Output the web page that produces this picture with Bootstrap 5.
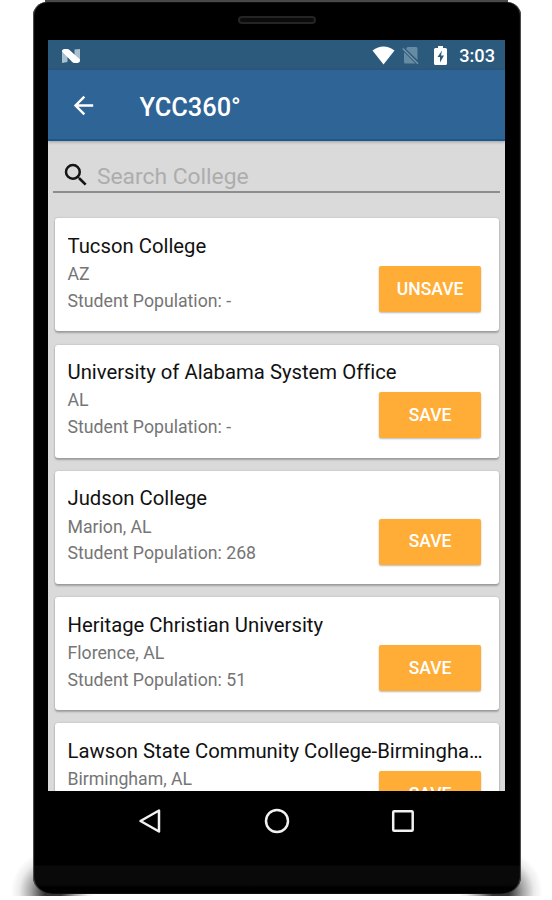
<!DOCTYPE html>
<html lang="en">
<head>
<meta charset="utf-8">
<meta name="viewport" content="width=device-width, initial-scale=1">
<title>YCC360°</title>
<link rel="stylesheet" href="https://cdn.jsdelivr.net/npm/bootstrap@5.3.0/dist/css/bootstrap.min.css">
<style>
body { width: 552px; height: 900px; background: #fff; font-family: Roboto, "Liberation Sans", sans-serif; line-height: 1; font-variant-ligatures: none; }
.stage { height: 900px; padding: 2px 31.5px 0 33px; }
.ground { left: 5px; right: 4px; top: 846px; height: 50px; filter: blur(.7px);
  background: radial-gradient(ellipse 42px 42px at 48px 92%, rgba(0,0,0,.8) 20%, rgba(0,0,0,.36) 52%, rgba(0,0,0,.08) 80%, rgba(0,0,0,0) 100%) left / 50% 100% no-repeat,
              radial-gradient(ellipse 42px 42px at calc(100% - 48px) 92%, rgba(0,0,0,.8) 20%, rgba(0,0,0,.36) 52%, rgba(0,0,0,.08) 80%, rgba(0,0,0,0) 100%) right / 50% 100% no-repeat; }
.top-edge { left: 45px; right: 44px; top: 0; height: 6px; background: #484848; }
.phone { height: 892px; background: linear-gradient(#000 863px, #090909 864px, #090909 882px, #000 886px); border-radius: 14px 14px 19px 19px / 14px 14px 17px 17px; box-shadow: inset 1px 0 1px #555, inset -1px 0 1px #555; padding: 0 15.5px 0 15px; }
.ear { height: 38px; padding-top: 14px; }
.speaker { width: 78px; height: 8px; border: 2px solid #242424; border-radius: 4px; background: #0b0b0b; }
.screen { height: 751px; background: #dadada; }
.status { height: 30px; background: #2c5a7c; padding: 1px 10px 0 12px; }
.gap-signal { margin-left: 7px; }
.gap-battery { margin-left: 15px; }
.appbar { height: 71px; background: #2f6496; border-bottom: 2px solid #1c588a; box-shadow: 0 1px 3px rgba(0,0,0,.28); position: relative; padding: 1px 0 0 21px; }
.app-title { font-size: 25.4px; font-weight: 500; margin-left: 41.5px; padding-top: 4px; white-space: nowrap; }
.clock { font-size: 18.2px; font-weight: 500; margin-left: 12px; padding-top: 1px; }
.search { height: 52px; margin: 0 5px; border-bottom: 2px solid #8d8d8d; padding: 19px 0 0 8px; }
.hint { font-size: 22.8px; color: #adadad; margin-left: 6px; line-height: 34px; }
.results { padding: 25.3px 6.5px 0; }
.college { height: 113px; margin-bottom: 13.3px; background: #fff; border-radius: 3px; box-shadow: 0 2px 2px rgba(0,0,0,.25), 0 0 2px rgba(0,0,0,.2); padding: 15.4px 13px 0; }
.college-name { font-size: 20.3px; line-height: 24px; color: #111; }
.meta { font-size: 17.7px; line-height: 26.5px; color: #757575; padding-top: 3.5px; }
.save { width: 101.5px; height: 46px; background: #ffad36; color: #fff; font-size: 17.5px; font-weight: 500; border-radius: 2px; margin: 8.3px 4.7px 0 0; box-shadow: 0 1px 2px rgba(0,0,0,.28); border: 0; padding: 1px 0 0; }
.keys { height: 60px; padding: 0 90px 0 90px; }
</style>
</head>
<body class="m-0 overflow-hidden position-relative">
<div class="ground position-absolute"></div>
<div class="top-edge position-absolute"></div>
<main class="stage position-relative">
  <div class="phone overflow-hidden">
    <div class="ear d-flex justify-content-center"><div class="speaker"></div></div>
    <div class="screen overflow-hidden">
      <div class="status d-flex align-items-center text-white">
        <svg width="22" height="16" viewBox="0 0 22 16"><path d="M2 2v13l5.500-1V5zM14.500 1.500v9.500l5.500 3V1z" fill="#a9c0d0"/><path d="M2 3.500Q2 1 4.500 1H7q1.500 0 2.800 1.200L20 11.500Q20 15 17 15h-2.500q-1.300 0-2.500-1.200z" fill="#fff"/></svg>
        <div class="d-flex align-items-center ms-auto">
          <svg width="23" height="19" viewBox="0 0 22 19"><path d="M0 4.500Q11-3.500 22 4.500L11 18.500z" fill="#fff"/></svg>
          <svg class="gap-signal" width="17" height="19" viewBox="0 0 17 19"><path d="M5.500 1H14q1.500 0 1.500 1.500V14L4 3zM2 6l11.500 11.500H3.500Q2 17.500 2 16z" fill="#688ba4"/><path d="M.8 2.500 16 17.700" stroke="#7695ab" stroke-width="1.500"/></svg>
          <svg class="gap-battery" width="13" height="19" viewBox="0 0 13 19"><path d="M4 0h5v2h2.500Q13 2 13 3.500v14q0 1.500-1.500 1.500h-10Q0 19 0 17.500v-14Q0 2 1.500 2H4z" fill="#fff"/><path d="M8 4.500 3.500 11H6v5.500L10 9.500H7z" fill="#2c5a7c"/></svg>
          <span class="clock">3:03</span>
        </div>
      </div>
      <header class="appbar d-flex align-items-center text-white">
        <svg width="29" height="29" viewBox="0 0 24 24" fill="#fff"><path d="M20 11H7.830l5.590-5.590L12 4l-8 8 8 8 1.410-1.410L7.830 13H20z"/></svg>
        <h1 class="app-title mb-0">YCC360°</h1>
      </header>
      <div class="search d-flex">
        <svg width="30" height="30" viewBox="0 0 24 24" fill="#151515"><path d="M15.500 14h-.79l-.28-.27A6.470 6.470 0 0 0 16 9.500 6.500 6.500 0 1 0 9.500 16c1.610 0 3.090-.59 4.230-1.570l.27.28v.79l5 4.990L20.490 19zm-6 0a4.500 4.500 0 1 1 0-9 4.500 4.500 0 0 1 0 9z"/></svg>
        <span class="hint">Search College</span>
      </div>
      <div class="results">
        <article class="college">
          <div class="college-name text-truncate">Tucson College</div>
          <div class="d-flex justify-content-between"><div class="meta">AZ<br>Student Population: -</div><button class="save">UNSAVE</button></div>
        </article>
        <article class="college">
          <div class="college-name text-truncate">University of Alabama System Office</div>
          <div class="d-flex justify-content-between"><div class="meta">AL<br>Student Population: -</div><button class="save">SAVE</button></div>
        </article>
        <article class="college">
          <div class="college-name text-truncate">Judson College</div>
          <div class="d-flex justify-content-between"><div class="meta">Marion, AL<br>Student Population: 268</div><button class="save">SAVE</button></div>
        </article>
        <article class="college">
          <div class="college-name text-truncate">Heritage Christian University</div>
          <div class="d-flex justify-content-between"><div class="meta">Florence, AL<br>Student Population: 51</div><button class="save">SAVE</button></div>
        </article>
        <article class="college">
          <div class="college-name text-truncate">Lawson State Community College-Birmingha…</div>
          <div class="d-flex justify-content-between"><div class="meta">Birmingham, AL</div><button class="save">SAVE</button></div>
        </article>
      </div>
    </div>
    <nav class="keys d-flex align-items-center justify-content-between">
      <svg width="24" height="26" viewBox="0 0 24 26" fill="none" stroke="#f1f1f1" stroke-width="2.500" stroke-linejoin="round"><path d="M21 2.500v21L2.500 13z"/></svg>
      <svg width="26" height="26" viewBox="0 0 26 26" fill="none" stroke="#f1f1f1" stroke-width="2.500"><circle cx="13" cy="13" r="11"/></svg>
      <svg width="24" height="24" viewBox="0 0 24 24" fill="none" stroke="#f1f1f1" stroke-width="2.500"><rect x="2.200" y="2.200" width="19.500" height="19.500" rx="1"/></svg>
    </nav>
  </div>
</main>
<script src="https://cdn.jsdelivr.net/npm/bootstrap@5.3.0/dist/js/bootstrap.bundle.min.js"></script>
</body>
</html>
